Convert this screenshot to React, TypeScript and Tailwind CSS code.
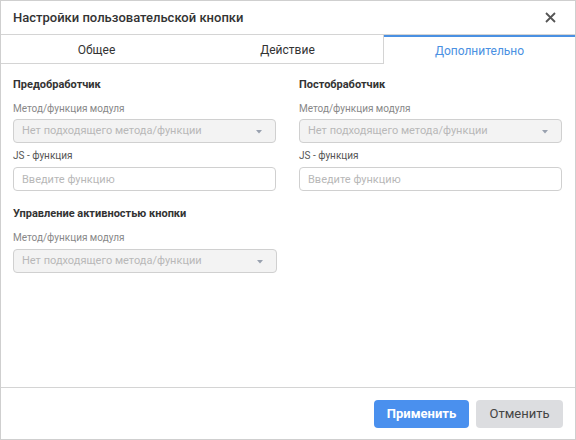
import React, { useState } from 'react';

const tabs = ['Общее', 'Действие', 'Дополнительно'];

const Caret = () => (
    <svg width="8" height="5" viewBox="0 0 8 5" className="text-gray-400">
        <path d="M1 1h6L4 4.5z" fill="currentColor" />
    </svg>
);

const MethodSelect: React.FC = () => (
    <div className="h-6 flex items-center justify-between px-2 rounded border border-[#d0d0d0] bg-[#f3f3f3] text-[11px] text-[#b8b8b8]">
        <span>Нет подходящего метода/функции</span>
        <span className="mr-1 flex"><Caret /></span>
    </div>
);

const FieldLabel: React.FC<{ dark?: boolean; children: React.ReactNode }> = ({ dark, children }) => (
    <div className={`text-[10px] leading-[14px] ${dark ? 'text-[#555]' : 'text-[#888]'}`}>{children}</div>
);

const Handler: React.FC<{ title: string }> = ({ title }) => (
    <div className="flex flex-col">
        <h3 className="text-[11px] leading-4 font-bold text-[#333]">{title}</h3>
        <div className="mt-[9px]"><FieldLabel>Метод/функция модуля</FieldLabel></div>
        <div className="mt-[3px]"><MethodSelect /></div>
        <div className="mt-[6px]"><FieldLabel dark>JS - функция</FieldLabel></div>
        <input
            placeholder="Введите функцию"
            className="mt-1 h-6 px-2 rounded border border-[#d0d0d0] text-[11px] text-[#333] placeholder:text-[#b8b8b8] outline-none"
        />
    </div>
);

const App: React.FC = () => {
    const [active, setActive] = useState(2);

    return (
        <div className="w-[576px] h-[440px] flex flex-col bg-white border border-[#cfcfcf] font-['Roboto',sans-serif]">
            {/* header */}
            <div className="h-[34px] flex items-center justify-between pl-3 pr-[19px] border-b border-[#d4d4d4]">
                <span className="text-[13px] font-medium text-[#333]">Настройки пользовательской кнопки</span>
                <svg width="11" height="11" viewBox="0 0 11 11">
                    <path d="M1 1l9 9M10 1l-9 9" stroke="#555" strokeWidth="1.8" />
                </svg>
            </div>

            {/* tabs */}
            <div className="flex h-[29px]">
                {tabs.map((t, i) => (
                    <button
                        key={t}
                        onClick={() => setActive(i)}
                        className={`flex-1 text-xs flex items-center justify-center ${active === i
                            ? 'border-t-2 border-[#4a90e2] text-[#4a90e2]'
                            : 'pt-[2px] border-b border-[#d4d4d4] text-[#333]'
                            } ${i === 1 && active === 2 ? 'border-r' : ''}`}
                    >
                        {t}
                    </button>
                ))}
            </div>

            {/* content */}
            <div className="flex-1 pt-[13px] pl-3 pr-[13px]">
                <div className="grid grid-cols-2 gap-x-[23px]">
                    <Handler title="Предобработчик" />
                    <Handler title="Постобработчик" />
                </div>
                <div className="mt-[15px] w-[264px] flex flex-col">
                    <h3 className="text-[11px] leading-4 font-bold text-[#333]">Управление активностью кнопки</h3>
                    <div className="mt-[9px]"><FieldLabel>Метод/функция модуля</FieldLabel></div>
                    <div className="mt-1"><MethodSelect /></div>
                </div>
            </div>

            {/* footer */}
            <div className="h-[52px] flex items-center justify-end gap-[7px] pr-3 border-t border-[#d4d4d4]">
                <button className="h-7 w-[95px] rounded bg-[#4a90ee] text-white text-[13px] font-bold">Применить</button>
                <button className="h-7 w-[87px] rounded bg-[#dcdde0] text-[#444] text-[13px]">Отменить</button>
            </div>
        </div>
    );
};

export default App;
